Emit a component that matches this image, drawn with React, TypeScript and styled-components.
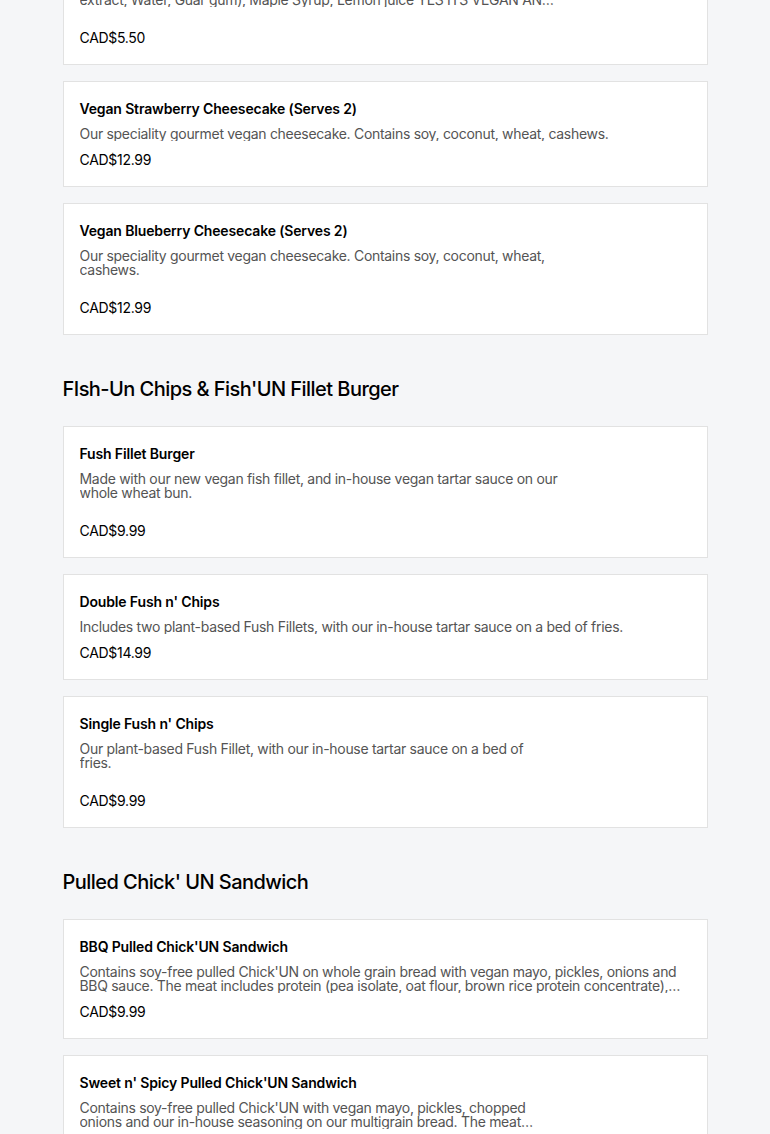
import React from "react";
import styled, { createGlobalStyle } from "styled-components";

const GlobalStyle = createGlobalStyle`
  html, body {
    margin: 0;
    padding: 0;
    background: #f5f6f8;
  }
  body {
    font-family: Inter, "Liberation Sans", Arial, sans-serif;
    color: #000;
    -webkit-font-smoothing: antialiased;
  }
`;

const Page = styled.main`
  width: 645px;
  margin: -67px auto 0;
  padding: 0 0 40px;
  display: flex;
  flex-direction: column;
`;

const Section = styled.section`
  display: flex;
  flex-direction: column;
  gap: 16px;
  & + & {
    margin-top: 42px;
  }
`;

const SectionTitle = styled.h2`
  margin: 0 0 9px;
  font-size: 20px;
  line-height: 24px;
  font-weight: 500;
  letter-spacing: -0.55px;
  color: #000;
`;

const Card = styled.article<{ $narrow?: boolean }>`
  background: #fff;
  border: 1px solid #e2e2e2;
  padding: 16px;
  display: flex;
  flex-direction: column;
  min-height: ${(p) => (p.$narrow ? "98px" : "0")};
`;

const ItemName = styled.h3`
  margin: 0;
  font-size: 14px;
  line-height: 22px;
  font-weight: 600;
  letter-spacing: -0.15px;
  color: #000;
`;

const ItemDesc = styled.p<{ $narrow?: boolean }>`
  margin: 7px 0 0;
  max-width: ${(p) => (p.$narrow ? "479px" : "none")};
  font-size: 14px;
  line-height: 14px;
  letter-spacing: -0.3px;
  color: #545454;
  display: -webkit-box;
  -webkit-line-clamp: 2;
  -webkit-box-orient: vertical;
  overflow: hidden;
`;

const Price = styled.div`
  margin-top: auto;
  padding-top: 9px;
  font-size: 14px;
  line-height: 20px;
  letter-spacing: -0.3px;
  color: #000;
`;

type Item = { name: string; desc: string; price: string; narrow?: boolean };

const sections: { title?: string; items: Item[] }[] = [
  {
    items: [
      {
        name: "Vegan Lemon Tart",
        desc:
          "Cashews, Coconut oil, Lemon zest, Cane sugar, Coconut milk (Coconut extract, Water, Guar gum), Maple Syrup, Lemon juice YES ITS VEGAN AND DELICIOUS",
        price: "CAD$5.50",
        narrow: true,
      },
      {
        name: "Vegan Strawberry Cheesecake (Serves 2)",
        desc: "Our speciality gourmet vegan cheesecake. Contains soy, coconut, wheat, cashews.",
        price: "CAD$12.99",
      },
      {
        name: "Vegan Blueberry Cheesecake (Serves 2)",
        desc: "Our speciality gourmet vegan cheesecake. Contains soy, coconut, wheat, cashews.",
        price: "CAD$12.99",
        narrow: true,
      },
    ],
  },
  {
    title: "FIsh-Un Chips & Fish'UN Fillet Burger",
    items: [
      {
        name: "Fush Fillet Burger",
        desc: "Made with our new vegan fish fillet, and in-house vegan tartar sauce on our whole wheat bun.",
        price: "CAD$9.99",
        narrow: true,
      },
      {
        name: "Double Fush n' Chips",
        desc: "Includes two plant-based Fush Fillets, with our in-house tartar sauce on a bed of fries.",
        price: "CAD$14.99",
      },
      {
        name: "Single Fush n' Chips",
        desc: "Our plant-based Fush Fillet, with our in-house tartar sauce on a bed of fries.",
        price: "CAD$9.99",
        narrow: true,
      },
    ],
  },
  {
    title: "Pulled Chick' UN Sandwich",
    items: [
      {
        name: "BBQ Pulled Chick'UN Sandwich",
        desc:
          "Contains soy-free pulled Chick'UN on whole grain bread with vegan mayo, pickles, onions and BBQ sauce. The meat includes protein (pea isolate, oat flour, brown rice protein concentrate), canola oil, and natural flavours.",
        price: "CAD$9.99",
      },
      {
        name: "Sweet n' Spicy Pulled Chick'UN Sandwich",
        desc:
          "Contains soy-free pulled Chick'UN with vegan mayo, pickles, chopped onions and our in-house seasoning on our multigrain bread. The meat includes protein (pea isolate, oat flour).",
        price: "CAD$9.99",
        narrow: true,
      },
    ],
  },
];

export default function App() {
  return (
    <>
      <GlobalStyle />
      <Page>
        {sections.map((s, i) => (
          <Section key={i}>
            {s.title && <SectionTitle>{s.title}</SectionTitle>}
            {s.items.map((it) => (
              <Card key={it.name} $narrow={it.narrow}>
                <ItemName>{it.name}</ItemName>
                <ItemDesc $narrow={it.narrow}>{it.desc}</ItemDesc>
                <Price>{it.price}</Price>
              </Card>
            ))}
          </Section>
        ))}
      </Page>
    </>
  );
}
